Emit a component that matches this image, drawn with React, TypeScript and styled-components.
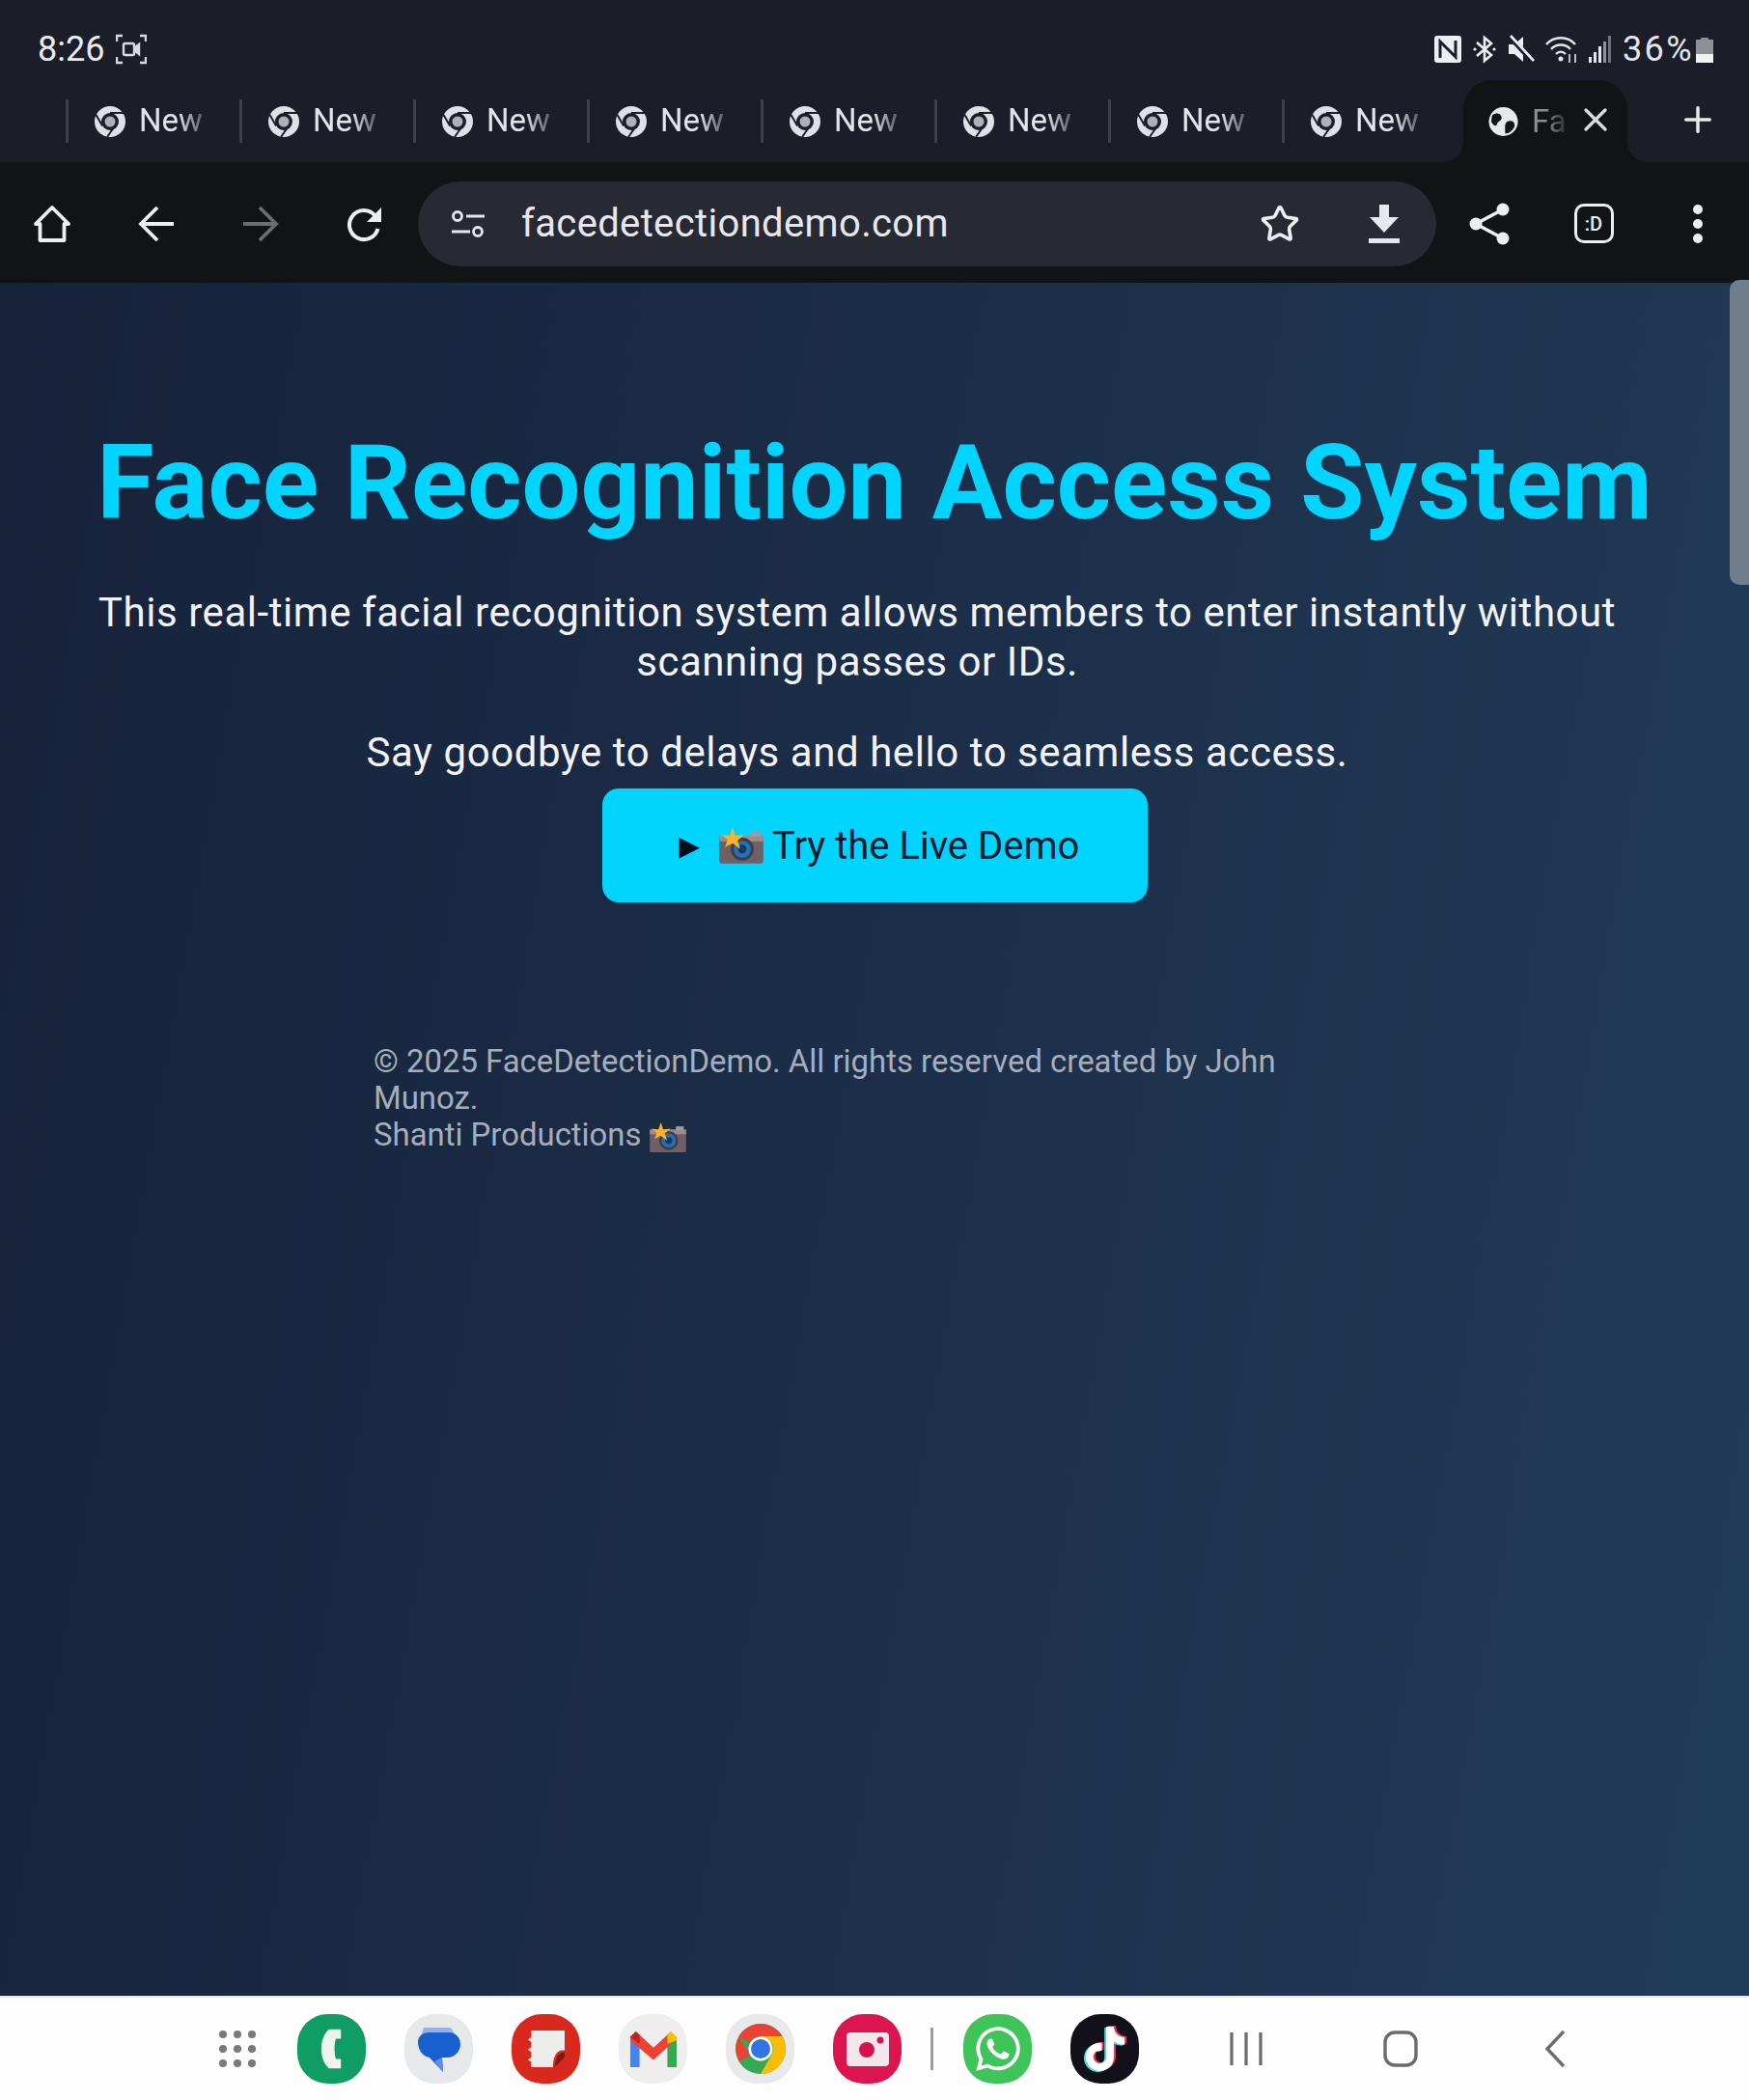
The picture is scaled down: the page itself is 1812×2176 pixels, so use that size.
import React from 'react';
import styled, { createGlobalStyle } from 'styled-components';
import { FaWhatsapp, FaTiktok } from 'react-icons/fa';
import { Star, X, Plus } from 'lucide-react';

const GlobalStyle = createGlobalStyle`
	html, body {
		margin: 0;
		padding: 0;
		background: #111317;
	}
	* {
		box-sizing: border-box;
	}
`;

const Screen = styled.div`
	position: relative;
	width: 1812px;
	height: 2176px;
	display: flex;
	flex-direction: column;
	overflow: hidden;
	font-family: Roboto, "Liberation Sans", sans-serif;
`;

const TopChrome = styled.header`
	background: #1b1e29;
`;

const StatusBar = styled.div`
	height: 83px;
	padding: 19px 37px 0 39px;
	display: flex;
	align-items: center;
	justify-content: space-between;
	color: #e4e6ea;
	font-size: 36px;
`;

const StatusGroup = styled.div`
	display: flex;
	align-items: center;
	gap: ${(p: { $gap?: number }) => p.$gap ?? 12}px;
`;

const BatteryLevel = styled.span`
	letter-spacing: 2.4px;
`;

const TabStrip = styled.div`
	height: 85px;
	padding-left: 68px;
	display: flex;
	align-items: center;
`;

const Tab = styled.div`
	width: 180px;
	height: 45px;
	padding-left: 27px;
	display: flex;
	align-items: center;
	gap: 14px;
	border-left: 3px solid #3d404a;
`;

const TabTitle = styled.span`
	width: 68px;
	margin-bottom: 2px;
	overflow: hidden;
	white-space: nowrap;
	font-size: 33px;
	line-height: 45px;
	color: #e2e4e9;
	-webkit-mask-image: linear-gradient(to right, #000 60%, rgba(0, 0, 0, 0.25) 100%);
	mask-image: linear-gradient(to right, #000 60%, rgba(0, 0, 0, 0.25) 100%);
`;

const ActiveTab = styled.div`
	position: relative;
	width: 170px;
	height: 85px;
	margin-left: 8px;
	padding-left: 26px;
	display: flex;
	align-items: center;
	gap: 14px;
	background: #111317;
	border-radius: 30px 30px 0 0;

	&::before,
	&::after {
		content: '';
		position: absolute;
		bottom: 0;
		width: 20px;
		height: 20px;
	}
	&::before {
		left: -20px;
		background: radial-gradient(circle at 0 0, #1b1e29 19px, #111317 20px);
	}
	&::after {
		right: -20px;
		background: radial-gradient(circle at 100% 0, #1b1e29 19px, #111317 20px);
	}
`;

const ActiveTitle = styled.span`
	width: 36px;
	overflow: hidden;
	font-size: 33px;
	color: #8b8d93;
	-webkit-mask-image: linear-gradient(to right, #000 40%, rgba(0, 0, 0, 0.2) 100%);
	mask-image: linear-gradient(to right, #000 40%, rgba(0, 0, 0, 0.2) 100%);
`;

const CloseSlot = styled.span`
	display: flex;
	margin: 0 0 4px -4px;
	color: #d9dbe0;
`;

const NewTabSlot = styled.span`
	display: flex;
	margin: 0 0 4px 52px;
	color: #e8e9ed;
`;

const Toolbar = styled.div`
	height: 125px;
	padding-top: 2px;
	display: flex;
	align-items: center;
	background: #111317;
	color: #eceef2;
`;

const ToolButton = styled.div`
	width: 108px;
	height: 60px;
	flex: none;
	display: flex;
	align-items: center;
	justify-content: center;
`;

const Address = styled.div`
	width: 1055px;
	height: 88px;
	margin: 0 1px 0 1px;
	flex: none;
	padding-left: 34px;
	display: flex;
	align-items: center;
	background: #272933;
	border-radius: 44px;
`;

const UrlText = styled.div`
	flex: 1;
	margin-left: 37px;
	font-size: 40px;
	letter-spacing: 0.35px;
	color: #e6e8ed;
	white-space: nowrap;
`;

const TabCounter = styled.div`
	width: 41px;
	height: 41px;
	display: flex;
	align-items: center;
	justify-content: center;
	border: 3.5px solid #eceef2;
	border-radius: 10px;
	font-size: 20px;
	font-weight: 500;
`;

const Page = styled.main`
	flex: 1;
	padding-top: 143px;
	background: linear-gradient(100deg, #16223a 0%, #1c2e49 50%, #213c58 100%);
`;

const Title = styled.h1`
	margin: 0;
	text-align: center;
	font-size: 108px;
	line-height: 128px;
	font-weight: 700;
	color: #00d4ff;
`;

const Intro = styled.p`
	width: 1646px;
	margin: 45px 0 0 65px;
	text-align: center;
	font-size: 42px;
	line-height: 51px;
	letter-spacing: 0.56px;
	color: #f1f3f6;

	& + & {
		margin-top: 43px;
	}
`;

const DemoButton = styled.a`
	width: 565px;
	height: 118px;
	margin: 12px auto 0;
	padding-left: 80px;
	display: flex;
	align-items: center;
	background: #00d4ff;
	border-radius: 17px;
	font-size: 40px;
	color: #0b1a2c;
`;

const PlayGlyph = styled.span`
	font-family: "DejaVu Sans", sans-serif;
	font-size: 28px;
	color: #04101c;
	margin-right: 20px;
`;

const ButtonLabel = styled.span`
	margin-left: 9px;
`;

const Footer = styled.footer`
	width: 1038px;
	margin: 146px auto 0;
	font-size: 32.9px;
	line-height: 38px;
	color: #a4aebc;
`;

const InlineEmoji = styled.span`
	display: inline-block;
	vertical-align: -7px;
	margin-left: 8px;
`;

const Scrollbar = styled.div`
	position: absolute;
	right: 0;
	top: 290px;
	width: 20px;
	height: 316px;
	background: #6f7d8c;
	border-radius: 10px 0 0 10px;
`;

const Dock = styled.nav`
	height: 108px;
	padding-left: 227px;
	display: flex;
	align-items: center;
	background: #fdfdfd;
	border-top: 2px solid #e8eaec;
`;

const AppGrid = styled.div`
	width: 38px;
	margin-right: 43px;
	display: grid;
	grid-template-columns: repeat(3, 8px);
	grid-auto-rows: 8px;
	justify-content: space-between;
	row-gap: 7px;
`;

const GridDot = styled.i`
	border-radius: 50%;
	background: #77797d;
`;

const AppIcon = styled.div<{ $bg: string }>`
	width: 71px;
	height: 72px;
	margin-right: 40px;
	flex: none;
	display: flex;
	align-items: center;
	justify-content: center;
	border-radius: 44%;
	background: ${(p) => p.$bg};
	color: #fff;
`;

const DockDivider = styled.div`
	width: 3px;
	height: 44px;
	margin: 0 31px 0 -10px;
	background: #9b9da0;
`;

const NavButton = styled.div<{ $first?: boolean }>`
	width: 160px;
	margin-left: ${(p) => (p.$first ? '-9px' : '0')};
	flex: none;
	display: flex;
	justify-content: center;
`;

const ChromeMark = ({ size = 32 }: { size?: number }) => (
	<svg width={size} height={size} viewBox="0 0 32 32">
		<circle cx="16" cy="16" r="16" fill="#dfe1e6" />
		<circle cx="16" cy="16" r="9" fill="#1b1e29" />
		<circle cx="16" cy="16" r="5.5" fill="#aeb1b8" />
		<path d="M16 7 H30 M8.2 20.5 L1.5 9 M20 22 L13 32" stroke="#1b1e29" strokeWidth="2" />
	</svg>
);

const GlobeMark = () => (
	<svg width="31" height="32" viewBox="0 0 32 32">
		<circle cx="16" cy="16" r="15.5" fill="#e6e8ec" />
		<path d="M4 9 C9 6 13 7 14 11 C15 15 10 15 9 19 C8 22 5 20 3 16 Z M20 16 C24 14 29 16 28 21 C26 26 22 29 18 29 C18 24 17 18 20 16 Z" fill="#111317" />
	</svg>
);

const ScreenRecord = () => (
	<svg width="32" height="32" viewBox="0 0 32 32" fill="none" stroke="#d9dbe0" strokeWidth="2.4">
		<path d="M1 8 V2 H7 M25 2 H31 V8 M31 24 V30 H25 M7 30 H1 V24" />
		<rect x="8" y="10" width="11" height="12" rx="1.5" />
		<path d="M19 15 L24 11 V21 L19 17" fill="#d9dbe0" />
	</svg>
);

const NfcIcon = () => (
	<svg width="28" height="28" viewBox="0 0 28 28">
		<rect width="28" height="28" rx="3" fill="#eceef2" />
		<path d="M6 23 V6 L22 22 V5" fill="none" stroke="#1b1e29" strokeWidth="3" />
	</svg>
);

const BluetoothIcon = () => (
	<svg width="26" height="30" viewBox="0 0 26 30" fill="none" stroke="#eceef2" strokeWidth="2.6">
		<path d="M5 8 L20 21 L13 27 V3 L20 9 L5 22" />
		<circle cx="3" cy="15" r="1.6" fill="#eceef2" stroke="none" />
		<circle cx="23" cy="15" r="1.6" fill="#eceef2" stroke="none" />
	</svg>
);

const MuteIcon = () => (
	<svg width="28" height="30" viewBox="0 0 28 30">
		<path d="M1 10 H7 L16 2 V28 L7 20 H1 Z" fill="#eceef2" />
		<path d="M2 2 L26 28" stroke="#1b1e29" strokeWidth="5" />
		<path d="M3 1 L27 27" stroke="#eceef2" strokeWidth="2.6" />
	</svg>
);

const WifiIcon = () => (
	<svg width="34" height="30" viewBox="0 0 34 30" fill="none" stroke="#e4e6ea" strokeWidth="2.4">
		<path d="M1 10 C9 1 23 1 31 10 M6 15 C11 9 21 9 26 15 M11 20 C14 17 18 17 21 20" />
		<circle cx="16" cy="25" r="2.5" fill="#e4e6ea" stroke="none" />
		<path d="M25 20 V29 M31 20 V29" strokeWidth="1.6" />
	</svg>
);

const SignalIcon = () => (
	<svg width="24" height="28" viewBox="0 0 24 28" fill="#e4e6ea">
		<rect x="0" y="22" width="3" height="6" />
		<rect x="5" y="17" width="3" height="11" />
		<rect x="10" y="11" width="3" height="17" />
		<rect x="15" y="6" width="3" height="22" fill="#8f9299" />
		<rect x="20" y="0" width="3" height="28" fill="#6f727a" />
	</svg>
);

const BatteryIcon = () => (
	<svg width="18" height="27" viewBox="0 0 18 27">
		<path d="M5 1 H13 V3 H18 V27 H0 V3 H5 Z" fill="#8d9096" />
		<rect y="18" width="18" height="9" fill="#f1f2f4" />
	</svg>
);

const HomeIcon = () => (
	<svg width="40" height="40" viewBox="0 0 40 40" fill="none" stroke="currentColor" strokeWidth="3.8" strokeLinejoin="round">
		<path d="M20 3 L37 20 H32.5 V37 H7.5 V20 H3 Z" />
	</svg>
);

const ArrowIcon = ({ flip }: { flip?: boolean }) => (
	<svg width="38" height="38" viewBox="0 0 38 38" fill="none" stroke={flip ? '#6b6d72' : 'currentColor'} strokeWidth="3.8" transform={flip ? 'scale(-1 1)' : undefined}>
		<path d="M37 19 H4 M20 2 L3 19 L20 36" />
	</svg>
);

const ReloadIcon = () => (
	<svg width="38" height="38" viewBox="0 0 38 38" fill="none" stroke="currentColor" strokeWidth="4">
		<path d="M29.5 10.4 A15 15 0 1 0 32.5 23.9" />
		<path d="M36 2 V17 H21 Z" fill="currentColor" stroke="none" />
	</svg>
);

const TuneIcon = () => (
	<svg width="36" height="28" viewBox="0 0 36 28" fill="none" stroke="#e6e8ed" strokeWidth="2.8">
		<circle cx="7" cy="6" r="4.5" />
		<path d="M16 6 H35 M1 22 H20" />
		<circle cx="28" cy="22" r="4.5" />
	</svg>
);

const DownloadIcon = () => (
	<svg width="32" height="40" viewBox="0 0 32 40" fill="#e6e8ed">
		<path d="M11 0 H21 V13 H31 L16 29 L1 13 H11 Z" />
		<rect y="35" width="32" height="5" />
	</svg>
);

const ShareIcon = () => (
	<svg width="42" height="44" viewBox="0 0 42 44" fill="currentColor" stroke="currentColor">
		<circle cx="35" cy="7" r="6.5" stroke="none" />
		<circle cx="7" cy="22" r="6.5" stroke="none" />
		<circle cx="35" cy="37" r="6.5" stroke="none" />
		<path d="M35 7 L7 22 L35 37" fill="none" strokeWidth="3.6" />
	</svg>
);

const MoreIcon = () => (
	<svg width="12" height="42" viewBox="0 0 12 42" fill="currentColor">
		<circle cx="6" cy="6" r="5" />
		<circle cx="6" cy="21" r="5" />
		<circle cx="6" cy="36" r="5" />
	</svg>
);

const CameraFlash = ({ size }: { size: number }) => (
	<svg width={size} height={size * 0.82} viewBox="0 0 46 38">
		<rect x="0" y="9" width="46" height="29" rx="3" fill="#6f5f66" />
		<rect x="0" y="9" width="46" height="6" fill="#9a8c8f" />
		<rect x="33" y="5" width="10" height="5" fill="#a39a9c" />
		<circle cx="24" cy="23" r="12" fill="#3a3f4c" />
		<circle cx="24" cy="23" r="9" fill="#2a6fb3" />
		<circle cx="24" cy="23" r="4.5" fill="#123a66" />
		<path d="M14 0 L17 9 L26 8 L19 14 L22 23 L14 17 L6 21 L9 13 L2 8 L11 9 Z" fill="#f7b32b" />
	</svg>
);

const PhoneGlyph = () => (
	<svg width="23" height="42" viewBox="0 0 26 52" preserveAspectRatio="none" fill="#eef3ef">
		<path d="M10 1 H24 V13 H18 C16 20 16 32 18 39 H24 V51 H10 C-2 40 -2 12 10 1 Z" />
	</svg>
);

const MessagesGlyph = () => (
	<svg width="47" height="47" viewBox="0 0 47 47">
		<path d="M8 1 H36 L45 16 H3 Z" fill="#8fb2f0" />
		<path d="M2 16 C2 9 8 6 14 6 H34 C41 6 46 11 46 18 C46 26 40 32 32 32 H27 L28 47 L14 32 C7 31 2 24 2 16 Z" fill="#1a5fd0" />
		<path d="M27 32 L28 47 L19 36 Z" fill="#5d8fe6" />
	</svg>
);

const NotesGlyph = () => (
	<svg width="38" height="38" viewBox="0 0 44 44">
		<path d="M4 0 H44 V24 C34 22 30 32 30 44 H4 V38 L0 35 L4 32 V26 L0 23 L4 20 V14 L0 11 L4 8 Z" fill="#ececea" />
		<path d="M44 26 C36 26 33 34 32 44 L44 32 Z" fill="#7c1a12" />
	</svg>
);

const GmailGlyph = () => (
	<svg width="48" height="37" viewBox="0 0 50 40" preserveAspectRatio="none">
		<path d="M0 6 V40 H10 V14 Z" fill="#4285f4" />
		<path d="M50 6 V40 H40 V14 Z" fill="#34a853" />
		<path d="M0 6 L6 0 L25 18 L44 0 V14 L25 32 L0 10 Z" fill="#ea4335" />
		<path d="M40 14 V3 L44 0 L50 6 V10 Z" fill="#fbbc04" />
		<path d="M0 6 L6 0 L10 4 V14 Z" fill="#c5221f" />
	</svg>
);

const ChromeColor = () => (
	<svg width="52" height="52" viewBox="0 0 52 52">
		<circle cx="26" cy="26" r="26" fill="#34a853" />
		<path d="M26 0 A26 26 0 0 1 48.5 13 H26 A13 13 0 0 0 14.7 19.5 L3.5 13 A26 26 0 0 1 26 0 Z" fill="#ea4335" />
		<path d="M3.5 13 L15 32.5 L4 39 A26 26 0 0 1 3.5 13 Z" fill="#ea4335" />
		<path d="M48.5 13 A26 26 0 0 1 26 52 L37.3 32.5 A13 13 0 0 0 37.3 19.5 L26 13 Z" fill="#fbbc04" />
		<circle cx="26" cy="26" r="12.5" fill="#fff" />
		<circle cx="26" cy="26" r="10" fill="#3273e6" />
	</svg>
);

const CameraGlyph = () => (
	<svg width="44" height="35" viewBox="0 0 44 35">
		<rect width="44" height="35" rx="4" fill="#f1e6ea" />
		<circle cx="21" cy="18" r="8" fill="#d5124f" />
		<circle cx="35" cy="8" r="3.5" fill="#d5124f" />
	</svg>
);

const Clock = styled.span`
	color: #e9eaee;
`;

const tabs = [0, 1, 2, 3, 4, 5, 6, 7];
const dots = [0, 1, 2, 3, 4, 5, 6, 7, 8];

export default function App() {
	return (
		<Screen>
			<GlobalStyle />
			<TopChrome>
				<StatusBar>
					<StatusGroup $gap={12}>
						<Clock>8:26</Clock>
						<ScreenRecord />
					</StatusGroup>
					<StatusGroup $gap={11}>
						<NfcIcon />
						<BluetoothIcon />
						<MuteIcon />
						<WifiIcon />
						<SignalIcon />
						<StatusGroup $gap={2}>
							<BatteryLevel>36%</BatteryLevel>
							<BatteryIcon />
						</StatusGroup>
					</StatusGroup>
				</StatusBar>
				<TabStrip>
					{tabs.map((t) => (
						<Tab key={t}>
							<ChromeMark />
							<TabTitle>New</TabTitle>
						</Tab>
					))}
					<ActiveTab>
						<GlobeMark />
						<ActiveTitle>Fa</ActiveTitle>
						<CloseSlot>
							<X size={40} strokeWidth={2} />
						</CloseSlot>
					</ActiveTab>
					<NewTabSlot>
						<Plus size={42} strokeWidth={2} />
					</NewTabSlot>
				</TabStrip>
			</TopChrome>

			<Toolbar>
				<ToolButton><HomeIcon /></ToolButton>
				<ToolButton><ArrowIcon /></ToolButton>
				<ToolButton><ArrowIcon flip /></ToolButton>
				<ToolButton><ReloadIcon /></ToolButton>
				<Address>
					<TuneIcon />
					<UrlText>facedetectiondemo.com</UrlText>
					<ToolButton><Star size={42} strokeWidth={2.1} /></ToolButton>
					<ToolButton><DownloadIcon /></ToolButton>
				</Address>
				<ToolButton><ShareIcon /></ToolButton>
				<ToolButton><TabCounter>:D</TabCounter></ToolButton>
				<ToolButton><MoreIcon /></ToolButton>
			</Toolbar>

			<Page>
				<Title>Face Recognition Access System</Title>
				<Intro>This real-time facial recognition system allows members to enter instantly without scanning passes or IDs.</Intro>
				<Intro>Say goodbye to delays and hello to seamless access.</Intro>
				<DemoButton>
					<PlayGlyph>▶</PlayGlyph>
					<CameraFlash size={46} />
					<ButtonLabel>Try the Live Demo</ButtonLabel>
				</DemoButton>
				<Footer>
					© 2025 FaceDetectionDemo. All rights reserved created by John Munoz.
					<br />
					Shanti Productions
					<InlineEmoji><CameraFlash size={38} /></InlineEmoji>
				</Footer>
			</Page>
			<Scrollbar />

			<Dock>
				<AppGrid>
					{dots.map((d) => <GridDot key={d} />)}
				</AppGrid>
				<AppIcon $bg="#0f9d63"><PhoneGlyph /></AppIcon>
				<AppIcon $bg="#e6e8ea"><MessagesGlyph /></AppIcon>
				<AppIcon $bg="#d9281e"><NotesGlyph /></AppIcon>
				<AppIcon $bg="#efedee"><GmailGlyph /></AppIcon>
				<AppIcon $bg="#e9e9ec"><ChromeColor /></AppIcon>
				<AppIcon $bg="#dc1450"><CameraGlyph /></AppIcon>
				<DockDivider />
				<AppIcon $bg="#3fc45a"><FaWhatsapp size={52} /></AppIcon>
				<AppIcon $bg="#12111a"><FaTiktok size={46} style={{ filter: 'drop-shadow(-2px 1px 0 #3fdde4) drop-shadow(2px -1px 0 #e92a55)' }} /></AppIcon>
				<NavButton $first>
					<svg width="34" height="36" viewBox="0 0 34 36" stroke="#6b6c70" strokeWidth="3.2">
						<path d="M2 1 V35 M17 1 V35 M32 1 V35" />
					</svg>
				</NavButton>
				<NavButton>
					<svg width="36" height="38" viewBox="0 0 36 38" fill="none" stroke="#6b6c70" strokeWidth="3.4">
						<rect x="2" y="2" width="32" height="34" rx="10" />
					</svg>
				</NavButton>
				<NavButton>
					<svg width="22" height="38" viewBox="0 0 22 38" fill="none" stroke="#6b6c70" strokeWidth="3.4">
						<path d="M20 1 L3 19 L20 37" />
					</svg>
				</NavButton>
			</Dock>
		</Screen>
	);
}
